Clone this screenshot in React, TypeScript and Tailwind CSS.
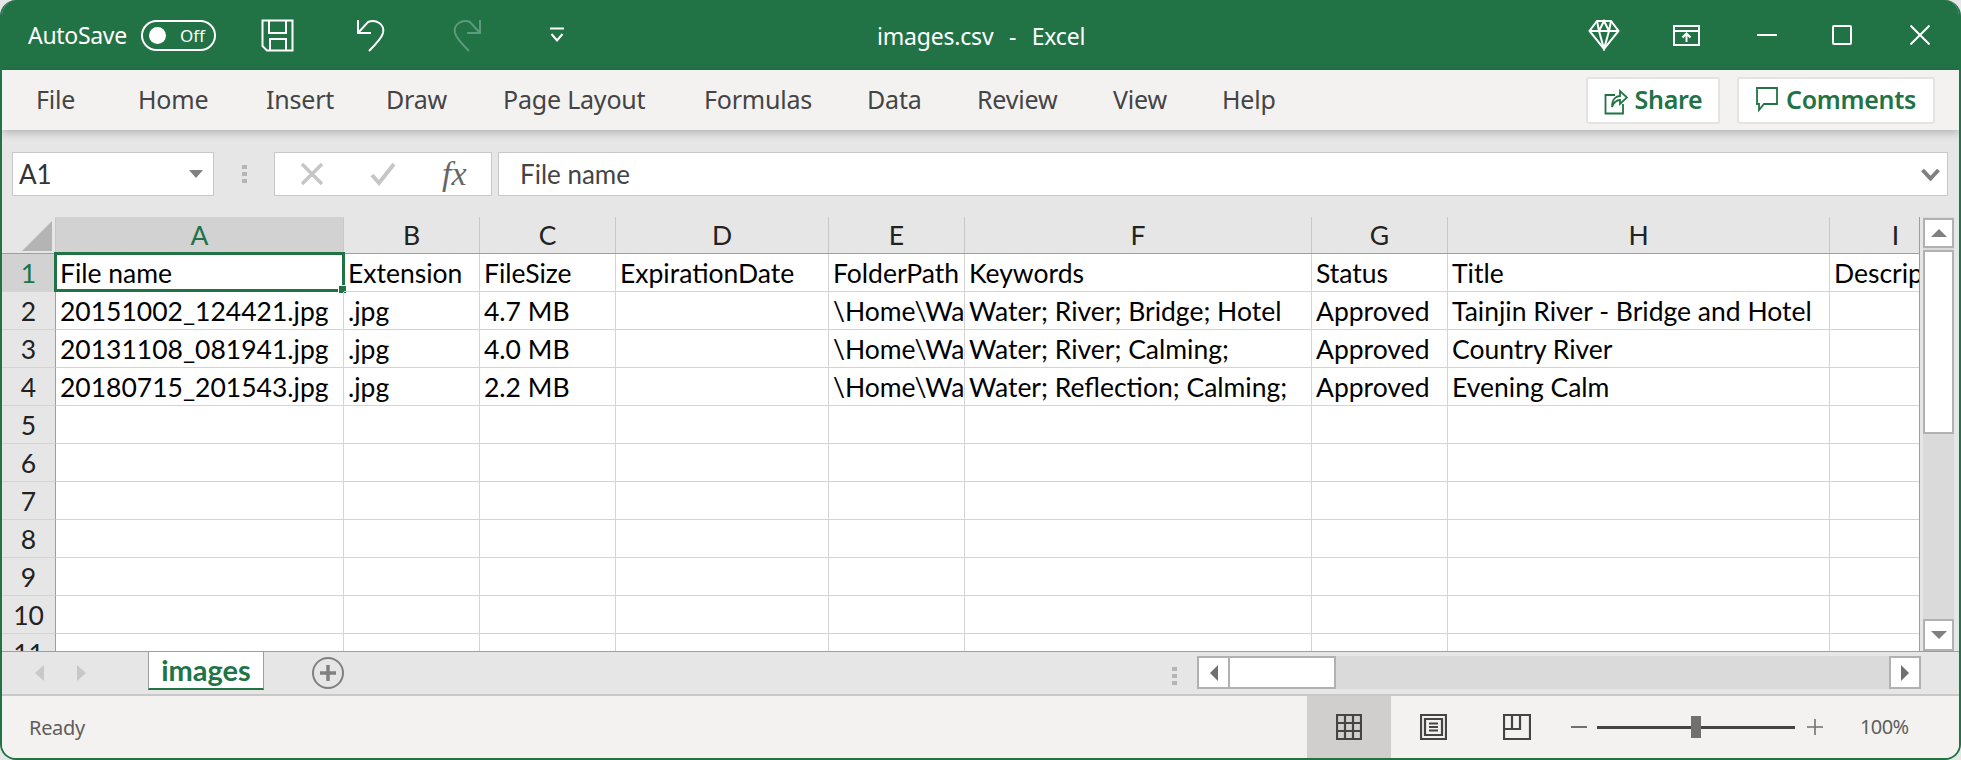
const uiFont = "font-['Noto_Sans',sans-serif]";
const cellFont = "font-['Lato',sans-serif]";

const tabs = [
  { label: "File", width: "w-[102px]" },
  { label: "Home", width: "w-[128px]" },
  { label: "Insert", width: "w-[120px]" },
  { label: "Draw", width: "w-[117px]" },
  { label: "Page Layout", width: "w-[201px]" },
  { label: "Formulas", width: "w-[163px]" },
  { label: "Data", width: "w-[110px]" },
  { label: "Review", width: "w-[136px]" },
  { label: "View", width: "w-[109px]" },
  { label: "Help", width: "w-[80px]" },
];

const columns = [
  { name: "A", width: "w-[288px]" },
  { name: "B", width: "w-[136px]" },
  { name: "C", width: "w-[136px]" },
  { name: "D", width: "w-[213px]" },
  { name: "E", width: "w-[136px]" },
  { name: "F", width: "w-[347px]" },
  { name: "G", width: "w-[136px]" },
  { name: "H", width: "w-[382px]" },
  { name: "I", width: "w-[132px]" },
];

const rows: string[][] = [
  ["File name", "Extension", "FileSize", "ExpirationDate", "FolderPath", "Keywords", "Status", "Title", "Description"],
  ["20151002_124421.jpg", ".jpg", "4.7 MB", "", "\\Home\\Water", "Water; River; Bridge; Hotel", "Approved", "Tainjin River - Bridge and Hotel", ""],
  ["20131108_081941.jpg", ".jpg", "4.0 MB", "", "\\Home\\Water", "Water; River; Calming;", "Approved", "Country River", ""],
  ["20180715_201543.jpg", ".jpg", "2.2 MB", "", "\\Home\\Water", "Water; Reflection; Calming;", "Approved", "Evening Calm", ""],
  ["", "", "", "", "", "", "", "", ""],
  ["", "", "", "", "", "", "", "", ""],
  ["", "", "", "", "", "", "", "", ""],
  ["", "", "", "", "", "", "", "", ""],
  ["", "", "", "", "", "", "", "", ""],
  ["", "", "", "", "", "", "", "", ""],
  ["", "", "", "", "", "", "", "", ""],
];

function TitleBar() {
  return (
    <div className={`flex h-[70px] shrink-0 items-center bg-[#217346] text-white ${uiFont}`}>
      <span className="ml-[26px] mt-[1px] w-[113px] text-[23px] tracking-[-0.3px]">AutoSave</span>
      <div className="flex h-[31px] w-[75px] items-center justify-between rounded-full border-2 border-white pl-[6px] pr-[9px]">
        <span className="h-[17px] w-[17px] rounded-full bg-white" />
        <span className="text-[17px] leading-none">Off</span>
      </div>
      <svg className="ml-[45px]" width="33" height="33" viewBox="0 0 33 33" fill="none" stroke="white" strokeWidth="2">
        <path d="M1.5 1.5H31.5V31.5H6L1.5 27Z" />
        <path d="M8 1.5V14H25V1.5" />
        <path d="M9 31.5V20H25V31.5" />
      </svg>
      <svg className="ml-[61px]" width="32" height="34" viewBox="0 0 32 34" fill="none" stroke="white" strokeWidth="2">
        <path d="M3 2V15H16" />
        <path d="M3 15L13 4C21 1 30 6 28 15C27 19 20 27 14 33" />
      </svg>
      <svg className="ml-[64px]" width="32" height="34" viewBox="0 0 32 34" fill="none" stroke="#5c9c7c" strokeWidth="2">
        <path d="M29 2V15H16" />
        <path d="M29 15L19 4C11 1 2 6 4 15C5 19 12 27 18 33" />
      </svg>
      <svg className="ml-[67px]" width="14" height="16" viewBox="0 0 14 16" fill="none" stroke="white" strokeWidth="2">
        <path d="M0 1.5H14" />
        <path d="M1.5 7L7 13.5L12.5 7" />
      </svg>
      <span className="ml-[313px] mt-[2px] w-[711px] whitespace-pre text-[23px] tracking-[-0.2px] [word-spacing:2px]">images.csv  -  Excel</span>
      <svg width="32" height="32" viewBox="0 0 32 32" fill="none" stroke="white" strokeWidth="2">
        <path d="M9 2H23L30.5 12L16 30L1.5 12Z" />
        <path d="M1.5 12H30.5M11 12L16 30L21 12M11 12L9 2M21 12L23 2M11 12L16 2L21 12" />
      </svg>
      <svg className="ml-[53px]" width="27" height="21" viewBox="0 0 27 21" fill="none" stroke="white" strokeWidth="2">
        <path d="M1 1H26V20H1Z" />
        <path d="M1 6H26" />
        <path d="M13.5 17V9M9.5 12.5L13.5 8.5L17.5 12.5" />
      </svg>
      <span className="ml-[57px] h-[2px] w-[20px] bg-white" />
      <span className="ml-[55px] h-[20px] w-[20px] rounded-[2px] border-2 border-white" />
      <svg className="ml-[58px]" width="20" height="20" viewBox="0 0 20 20" stroke="white" strokeWidth="2">
        <path d="M0.5 0.5L19.5 19.5M19.5 0.5L0.5 19.5" />
      </svg>
    </div>
  );
}

function Ribbon() {
  return (
    <div className={`relative z-10 flex h-[60px] shrink-0 items-center bg-[#f3f2f1] pl-[34px] shadow-[0_3px_8px_rgba(0,0,0,0.22)] ${uiFont}`}>
      <div className="flex w-[1550px] text-[25px] tracking-[-0.2px] text-[#444444]">
        {tabs.map((tab) => (
          <span key={tab.label} className={`${tab.width} shrink-0`}>
            {tab.label}
          </span>
        ))}
      </div>
      <button className="flex h-[47px] w-[134px] items-center justify-center gap-[7px] rounded-[3px] border-2 border-[#e4e3e1] bg-white text-[25px] font-semibold tracking-[-0.3px] text-[#217346]">
        <svg width="24" height="30" viewBox="0 0 24 30" fill="none" stroke="#217346" strokeWidth="1.8">
          <path d="M11 10H1.5V28.5H19V19" />
          <path d="M8 22C8 14 12 11 16 11V6L23 12.5L16 19V15C12 15 10 17 8 22Z" />
        </svg>
        Share
      </button>
      <button className="ml-[17px] flex h-[47px] w-[198px] items-center justify-center gap-[8px] rounded-[3px] border-2 border-[#e4e3e1] bg-white text-[25px] font-semibold tracking-[-0.3px] text-[#217346]">
        <svg width="22" height="26" viewBox="0 0 22 26" fill="none" stroke="#217346" strokeWidth="1.8">
          <path d="M1 1H21V17H8L3 23V17H1Z" />
        </svg>
        Comments
      </button>
    </div>
  );
}

function FormulaBar() {
  return (
    <div className="flex h-[87px] shrink-0 items-start bg-[#e6e6e6] pl-[10px] pt-[22px]">
      <div className={`flex h-[44px] w-[202px] items-center justify-between border border-[#c8c8c8] bg-white pl-[6px] pr-[10px] text-[26px] text-[#333333] ${cellFont}`}>
        A1
        <span className="h-0 w-0 border-x-[7px] border-t-[8px] border-x-transparent border-t-[#808080]" />
      </div>
      <div className="ml-[28px] mt-[13px] flex w-[5px] flex-col gap-[3px]">
        <span className="h-[4px] w-[5px] bg-[#b5b5b5]" />
        <span className="h-[4px] w-[5px] bg-[#b5b5b5]" />
        <span className="h-[4px] w-[5px] bg-[#b5b5b5]" />
      </div>
      <div className="ml-[27px] flex h-[44px] w-[218px] items-center border border-[#c8c8c8] bg-white">
        <svg className="ml-[25px]" width="24" height="24" viewBox="0 0 24 24" stroke="#c6c6c6" strokeWidth="3.5">
          <path d="M2 2L22 22M22 2L2 22" />
        </svg>
        <svg className="ml-[46px]" width="26" height="24" viewBox="0 0 26 24" fill="none" stroke="#c6c6c6" strokeWidth="4">
          <path d="M2 13L9 21L24 2" />
        </svg>
        <span className="ml-[46px] font-['Liberation_Serif',serif] text-[34px] italic leading-none text-[#666666]">fx</span>
      </div>
      <div className={`ml-[6px] flex h-[44px] w-[1450px] items-center justify-between border border-[#c8c8c8] bg-white pl-[21px] pr-[7px] text-[26px] text-[#444444] ${cellFont}`}>
        <span className="mt-[1px]">File name</span>
        <svg width="19" height="13" viewBox="0 0 19 13" fill="none" stroke="#808080" strokeWidth="4">
          <path d="M1.5 2L9.5 10.5L17.5 2" />
        </svg>
      </div>
    </div>
  );
}

function Sheet() {
  return (
    <div className={`h-[434px] w-[1918px] shrink-0 overflow-hidden border-r border-[#9e9e9e] bg-white text-[26.5px] text-black ${cellFont}`}>
      <div className="flex h-[37px] border-b border-[#9e9e9e] bg-[#e6e6e6]">
        <div className="flex w-[54px] shrink-0 items-end justify-end border-r border-[#c8c8c8] pb-[2px] pr-[3px]">
          <span className="h-0 w-0 border-b-[30px] border-l-[30px] border-b-[#b4b4b4] border-l-transparent" />
        </div>
        {columns.map((col, i) => (
          <div
            key={col.name}
            className={`${col.width} flex shrink-0 items-center justify-center border-r border-[#c8c8c8] leading-none ${i === 0 ? "bg-[#d2d2d2] text-[#217346]" : "text-[#222222]"}`}
          >
            {col.name}
          </div>
        ))}
      </div>
      {rows.map((row, r) => (
        <div key={r} className="flex h-[38px]">
          <div
            className={`flex w-[54px] shrink-0 items-center justify-center border-r border-b border-[#9e9e9e] border-b-[#d4d4d4] pt-[2px] ${r === 0 ? "bg-[#d2d2d2] text-[#217346]" : "bg-[#e6e6e6] text-[#222222]"}`}
          >
            {r + 1}
          </div>
          {row.map((text, c) => {
            const selected = r === 0 && c === 0;
            return (
              <div
                key={c}
                className={`${columns[c].width} relative flex shrink-0 items-center whitespace-nowrap border-b border-r border-[#d4d4d4] pl-[4px] pt-[3px] ${selected ? "" : "overflow-hidden"}`}
              >
                {text}
                {selected && (
                  <div className="absolute -inset-x-[2px] -bottom-[1px] -top-[2px] border-[3px] border-[#217346]">
                    <span className="absolute -bottom-[5px] -right-[5px] h-[9px] w-[9px] border border-white bg-[#217346]" />
                  </div>
                )}
              </div>
            );
          })}
        </div>
      ))}
    </div>
  );
}

function VerticalScroll() {
  return (
    <div className="ml-[3px] flex h-[434px] w-[31px] shrink-0 flex-col bg-[#dadada] pt-[1px]">
      <div className="flex h-[30px] items-center justify-center border-2 border-[#b1b1b1] bg-white">
        <span className="h-0 w-0 border-x-[8px] border-b-[8px] border-x-transparent border-b-[#808080]" />
      </div>
      <div className="mt-[2px] h-[184px] border-2 border-[#b1b1b1] bg-white" />
      <div className="mt-auto flex h-[32px] items-center justify-center border-2 border-[#b1b1b1] bg-white">
        <span className="h-0 w-0 border-x-[8px] border-t-[8px] border-x-transparent border-t-[#808080]" />
      </div>
    </div>
  );
}

function TabStrip() {
  return (
    <div className={`flex h-[45px] shrink-0 items-start border-t border-[#9e9e9e] border-b-[2px] border-b-[#c8c8c8] bg-[#e6e6e6] ${cellFont}`}>
      <span className="ml-[33px] mt-[13px] h-0 w-0 border-y-[8px] border-r-[9px] border-y-transparent border-r-[#c8c8c8]" />
      <span className="ml-[33px] mt-[13px] h-0 w-0 border-y-[8px] border-l-[9px] border-y-transparent border-l-[#c8c8c8]" />
      <div className="ml-[62px] flex h-[38px] w-[116px] items-center justify-center border-x border-b-[2px] border-x-[#9e9e9e] border-b-[#217346] bg-white pb-[2px] text-[29px] font-bold leading-none text-[#217346]">
        images
      </div>
      <div className="ml-[48px] mt-[5px] flex h-[32px] w-[32px] items-center justify-center rounded-full border-2 border-[#808080]">
        <svg width="16" height="16" viewBox="0 0 16 16" stroke="#808080" strokeWidth="3.5">
          <path d="M8 0V16M0 8H16" />
        </svg>
      </div>
      <div className="ml-[828px] mt-[15px] flex flex-col gap-[3px]">
        <span className="h-[4px] w-[5px] bg-[#b5b5b5]" />
        <span className="h-[4px] w-[5px] bg-[#b5b5b5]" />
        <span className="h-[4px] w-[5px] bg-[#b5b5b5]" />
      </div>
      <div className="ml-[20px] mt-[4px] flex h-[33px] w-[724px] bg-[#dadada]">
        <div className="flex w-[33px] items-center justify-center border-2 border-[#b1b1b1] bg-white">
          <span className="h-0 w-0 border-y-[8px] border-r-[8px] border-y-transparent border-r-[#707070]" />
        </div>
        <div className="h-full w-[106px] border-y-2 border-r-2 border-[#b1b1b1] bg-white" />
        <div className="ml-auto flex w-[32px] items-center justify-center border-2 border-[#b1b1b1] bg-white">
          <span className="h-0 w-0 border-y-[8px] border-l-[8px] border-y-transparent border-l-[#707070]" />
        </div>
      </div>
    </div>
  );
}

function StatusBar() {
  return (
    <div className={`flex h-[62px] shrink-0 items-center bg-[#f3f2f1] text-[#605e5c] ${uiFont}`}>
      <span className="ml-[27px] mt-[1px] w-[1278px] text-[20px] tracking-[-0.3px]">Ready</span>
      <div className="flex h-full w-[84px] items-center justify-center bg-[#d0cfcd]">
        <svg width="26" height="26" viewBox="0 0 26 26" fill="none" stroke="#444444" strokeWidth="2.2">
          <path d="M1 1H25V25H1ZM1 9H25M1 17H25M9 1V25M17 1V25" />
        </svg>
      </div>
      <svg className="ml-[29px]" width="27" height="26" viewBox="0 0 27 26" fill="none" stroke="#444444" strokeWidth="2.2">
        <path d="M1 1H26V25H1Z" />
        <path d="M5 5H22V21H5Z" />
        <path d="M9 9.5H18M9 13H18M9 16.5H18" />
      </svg>
      <svg className="ml-[56px]" width="28" height="26" viewBox="0 0 28 26" fill="none" stroke="#444444" strokeWidth="2.2">
        <path d="M1 1H27V25H1Z" />
        <path d="M1 15H17V1M9 1V15" />
      </svg>
      <span className="ml-[40px] h-[2px] w-[16px] bg-[#707070]" />
      <div className="relative ml-[10px] h-[3px] w-[198px] bg-[#444444]">
        <span className="absolute -top-[10px] left-[94px] h-[22px] w-[10px] bg-[#707070]" />
      </div>
      <svg className="ml-[12px]" width="16" height="16" viewBox="0 0 16 16" stroke="#707070" strokeWidth="1.6">
        <path d="M8 0V16M0 8H16" />
      </svg>
      <span className="ml-[37px] text-[20px] tracking-[-0.6px]">100%</span>
    </div>
  );
}

export default function App() {
  return (
    <div className="h-[760px] w-[1961px] overflow-hidden bg-[#e6e6e6]">
      <div className="flex h-full w-full flex-col overflow-hidden rounded-[16px] border-x-2 border-b-2 border-[#217346] bg-[#e6e6e6]">
        <TitleBar />
        <Ribbon />
        <FormulaBar />
        <div className="flex shrink-0">
          <Sheet />
          <VerticalScroll />
        </div>
        <TabStrip />
        <StatusBar />
      </div>
    </div>
  );
}
